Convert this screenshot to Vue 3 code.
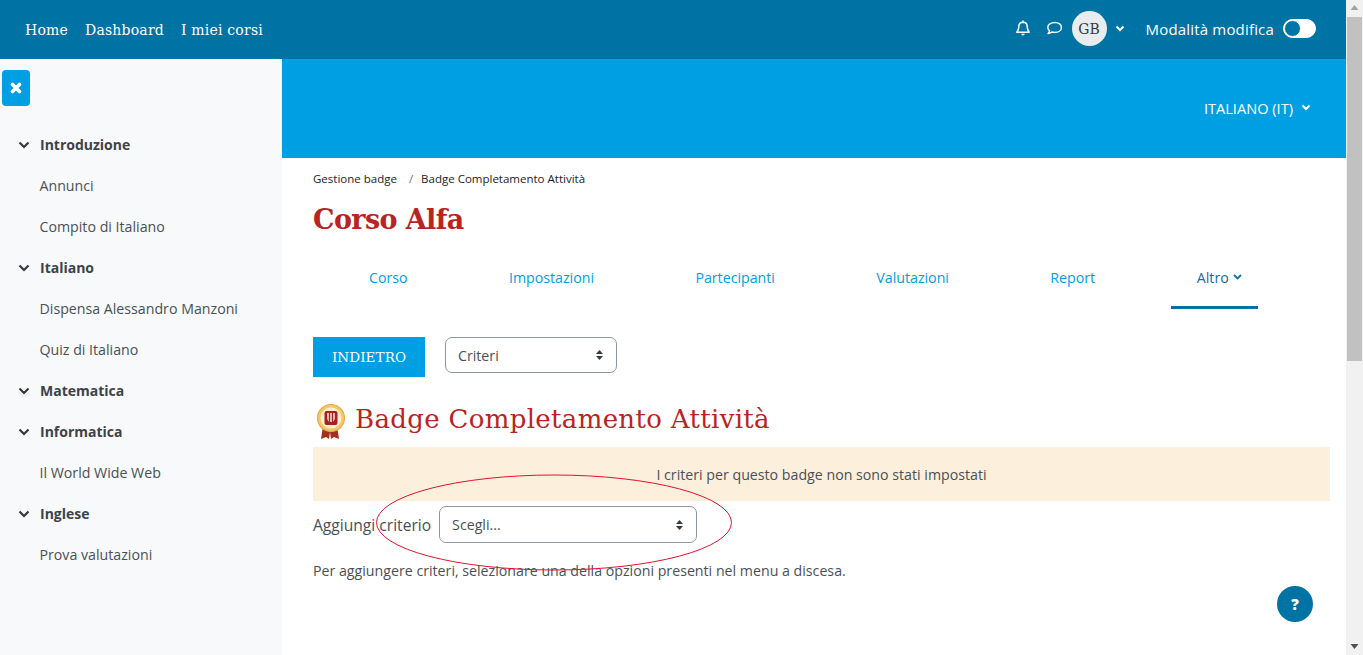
<script setup>
const topLinks = ['Home', 'Dashboard', 'I miei corsi']

// Indice laterale del corso
const sections = [
  { title: 'Introduzione', items: ['Annunci', 'Compito di Italiano'] },
  { title: 'Italiano', items: ['Dispensa Alessandro Manzoni', 'Quiz di Italiano'] },
  { title: 'Matematica', items: [] },
  { title: 'Informatica', items: ['Il World Wide Web'] },
  { title: 'Inglese', items: ['Prova valutazioni'] }
]

const tabs = ['Corso', 'Impostazioni', 'Partecipanti', 'Valutazioni', 'Report']
</script>

<template>
  <div class="page">
    <div class="window">
      <header class="topbar">
        <nav class="top-links">
          <a v-for="link in topLinks" :key="link">{{ link }}</a>
        </nav>
        <div class="top-right">
          <svg class="bell" width="16" height="17" viewBox="0 0 16 17" fill="none" stroke="#fff" stroke-width="1.5">
            <path d="M8 2.200c-2.700 0-4.200 2-4.200 4.600 0 2.900-.8 4.100-2 5.400h12.400c-1.200-1.300-2-2.500-2-5.400C12.200 4.200 10.700 2.200 8 2.200z" stroke-linejoin="round" />
            <path d="M8 .6v1.600" />
            <path d="M6.300 13.800a1.700 1.700 0 0 0 3.400 0z" fill="#fff" stroke="none" />
          </svg>
          <svg class="chat" width="17" height="15" viewBox="0 0 17 15" fill="none" stroke="#fff" stroke-width="1.400">
            <path d="M8.800 1.500c-4 0-7 2.200-7 4.900 0 1.300.7 2.400 1.800 3.300-.2 1-.8 2-1.600 2.900 1.500-.2 2.900-.8 3.900-1.600.9.300 1.900.4 2.900.4 3.900 0 6.600-2.200 6.600-5S12.800 1.500 8.800 1.500z" stroke-linejoin="round" />
          </svg>
          <div class="avatar">GB</div>
          <svg class="chev user-chev" width="10" height="7" viewBox="0 0 10 7"><path d="M1.500 1.500 5 5l3.500-3.500" fill="none" stroke="#fff" stroke-width="2" /></svg>
          <span class="edit-label">Modalità modifica</span>
          <div class="toggle"><span class="knob"></span></div>
        </div>
      </header>

      <div class="body">
        <aside class="sidebar">
          <button class="close-btn">
            <svg width="12" height="12" viewBox="0 0 12 12"><path d="M2.500 2.500l7 7M9.500 2.500l-7 7" stroke="#fff" stroke-width="3.600" stroke-linecap="round" /></svg>
          </button>
          <ul class="course-index">
            <template v-for="section in sections" :key="section.title">
              <li class="section-title">
                <svg width="12" height="8" viewBox="0 0 12 8"><path d="M1.500 1.500 6 6l4.500-4.500" fill="none" stroke="#343a40" stroke-width="2.200" /></svg>
                <span>{{ section.title }}</span>
              </li>
              <li v-for="item in section.items" :key="item" class="section-item">{{ item }}</li>
            </template>
          </ul>
        </aside>

        <main class="main">
          <div class="banner">
            <span>ITALIANO (IT)</span>
            <svg width="10" height="7" viewBox="0 0 10 7"><path d="M1.500 1.500 5 5l3.500-3.500" fill="none" stroke="#fff" stroke-width="2" /></svg>
          </div>

          <div class="content">
            <div class="breadcrumb">
              <span>Gestione badge</span>
              <span class="sep">/</span>
              <span>Badge Completamento Attività</span>
            </div>
            <h1 class="course-title">Corso Alfa</h1>

            <nav class="tabs">
              <a v-for="tab in tabs" :key="tab" class="tab">{{ tab }}</a>
              <a class="tab active">
                Altro
                <svg width="9" height="6" viewBox="0 0 9 6"><path d="M1 1l3.500 3.500L8 1" fill="none" stroke="#0f6fa0" stroke-width="1.800" /></svg>
              </a>
            </nav>

            <div class="action-row">
              <button class="back-btn">INDIETRO</button>
              <div class="select select-criteri">
                <span>Criteri</span>
                <svg width="9" height="12" viewBox="0 0 9 12"><path d="M4.500 1 8 5H1zM4.500 11 1 7h7z" fill="#343a40" /></svg>
              </div>
            </div>

            <h2 class="badge-title">
              <svg class="badge-icon" width="32" height="36" viewBox="0 0 32 36">
                <path d="M10 22 8 35l5-2 3 2 1-7 1 7 3-2 5 2-2-13z" fill="#a3301f" />
                <circle cx="18" cy="14" r="13.500" fill="#f4c76a" stroke="#e9ad47" stroke-width="1.200" />
                <circle cx="18" cy="14" r="10.500" fill="#fbeecb" />
                <rect x="11.500" y="7" width="13" height="14" rx="2" fill="#a81f24" />
                <path d="M14 9v6l2 3V9zM17 9v9h2V9zM20 9v9l2-3V9z" fill="#e8b9a6" />
              </svg>
              <span>Badge Completamento Attività</span>
            </h2>

            <div class="notice">I criteri per questo badge non sono stati impostati</div>

            <div class="criteria-row">
              <label>Aggiungi criterio</label>
              <div class="select select-add">
                <span>Scegli...</span>
                <svg width="9" height="12" viewBox="0 0 9 12"><path d="M4.500 1 8 5H1zM4.500 11 1 7h7z" fill="#343a40" /></svg>
              </div>
            </div>

            <p class="hint">Per aggiungere criteri, selezionare una della opzioni presenti nel menu a discesa.</p>
          </div>

          <!-- cerchio rosso disegnato sopra lo screenshot -->
          <svg class="annotation" width="360" height="100" viewBox="0 0 360 100">
            <ellipse cx="178" cy="48.500" rx="177.500" ry="47.500" fill="none" stroke="#e8112d" stroke-width="1" />
          </svg>

          <button class="help-btn">?</button>
        </main>
      </div>
    </div>

    <div class="scrollbar">
      <svg width="17" height="17" viewBox="0 0 17 17"><path d="M8.500 5 12.500 10h-8z" fill="#a3a3a3" /></svg>
      <div class="thumb"></div>
      <svg width="17" height="17" viewBox="0 0 17 17"><path d="M8.500 11 4.500 6h8z" fill="#505050" /></svg>
    </div>
  </div>
</template>

<style>
html,
body {
  margin: 0;
  overflow: hidden;
}
</style>

<style scoped>
.page {
  display: flex;
  width: 1363px;
  height: 655px;
  overflow: hidden;
  font-family: "Open Sans", "Liberation Sans", sans-serif;
  font-size: 14.2px;
  color: #495057;
  background: #fff;
}

.window {
  flex: 1;
  min-width: 0;
  display: flex;
  flex-direction: column;
}

.topbar {
  height: 59px;
  flex-shrink: 0;
  display: flex;
  align-items: center;
  justify-content: space-between;
  padding: 0 30px 0 25px;
  background: #0073a5;
  color: #fff;
}

.top-links {
  display: flex;
  gap: 17px;
  font-family: "DejaVu Serif", serif;
  font-size: 14px;
  letter-spacing: 0.2px;
}

.top-right {
  display: flex;
  align-items: center;
  margin-bottom: 2px;
}

.bell {
  margin-right: 15px;
}

.chat {
  margin-right: 9px;
}

.avatar {
  width: 35px;
  height: 35px;
  border-radius: 50%;
  background: #e9ecef;
  color: #343a40;
  display: flex;
  align-items: center;
  justify-content: center;
  font-family: "DejaVu Serif", serif;
  font-size: 14px;
}

.user-chev {
  margin: 0 21px 0 8px;
}

.edit-label {
  font-size: 15px;
  letter-spacing: 0.18px;
  margin-right: 9px;
}

.toggle {
  width: 33px;
  height: 19px;
  border-radius: 10px;
  background: #fff;
  box-sizing: border-box;
  border: 1px solid #fff;
  display: flex;
  align-items: center;
}

.knob {
  width: 17px;
  height: 17px;
  border-radius: 50%;
  background: #0073a5;
  box-sizing: border-box;
  border: 1px solid #fff;
}

.body {
  flex: 1;
  display: flex;
  min-height: 0;
}

.sidebar {
  width: 282px;
  flex-shrink: 0;
  background: #f8f9fa;
  padding-top: 11px;
  box-sizing: border-box;
}

.close-btn {
  display: flex;
  align-items: center;
  justify-content: center;
  width: 28px;
  height: 36px;
  margin-left: 2px;
  padding: 0;
  border: none;
  border-radius: 4px;
  background: #009fe3;
}

.course-index {
  list-style: none;
  margin: 18px 0 0;
  padding: 0;
}

.section-title,
.section-item {
  height: 41px;
  display: flex;
  align-items: center;
}

.section-title {
  font-size: 14px;
  font-weight: 700;
  color: #3d4349;
  gap: 10px;
  padding-left: 18px;
}

.section-item {
  padding-left: 39.5px;
}

.main {
  position: relative;
  flex: 1;
  min-width: 0;
}

.banner {
  box-sizing: border-box;
  height: 99px;
  display: flex;
  align-items: center;
  justify-content: flex-end;
  gap: 8px;
  padding: 0 35px 2px 0;
  background: #009fe3;
  color: #fff;
  font-size: 14.6px;
}

.content {
  padding: 13px 16px 0 31px;
}

.breadcrumb {
  display: flex;
  font-size: 11.5px;
  line-height: 16px;
  color: #1d2125;
}

.sep {
  margin: 0 8px 0 12px;
  color: #6a737b;
}

.course-title {
  margin: 15px 0 0;
  font-family: "DejaVu Serif", serif;
  font-weight: 700;
  font-size: 27px;
  line-height: 36px;
  letter-spacing: -0.6px;
  color: #ba2323;
}

.tabs {
  display: flex;
  margin-top: 12px;
  height: 59px;
}

.tab {
  display: flex;
  align-items: center;
  gap: 4px;
  box-sizing: border-box;
  height: 59px;
  padding: 0 50.7px 2px;
  border-bottom: 3px solid transparent;
  color: #009fe3;
  white-space: nowrap;
}

.tab:first-child {
  padding-left: 56px;
}

.tab.active {
  padding: 0 16px 2px 26px;
  margin-left: 25px;
  color: #0f6fa0;
  border-bottom-color: #0073a5;
}

.action-row {
  display: flex;
  align-items: flex-start;
  gap: 20px;
  margin-top: 28px;
}

.back-btn {
  width: 112px;
  height: 40px;
  padding: 0;
  border: none;
  background: #009fe3;
  color: #fff;
  font-family: "DejaVu Serif", serif;
  font-size: 13.5px;
  letter-spacing: 0.1px;
}

.select {
  display: flex;
  align-items: center;
  justify-content: space-between;
  box-sizing: border-box;
  height: 36px;
  padding: 0 12px;
  background: #fff;
  border: 1px solid #8f959e;
  border-radius: 7px;
  color: #495057;
}

.select-criteri {
  width: 172px;
}

.select-add {
  width: 258px;
  height: 37px;
  font-size: 14.2px;
}

.badge-title {
  display: flex;
  align-items: center;
  margin: 19px 0 5px;
  height: 46px;
  font-family: "DejaVu Serif", serif;
  font-weight: 400;
  font-size: 26px;
  letter-spacing: 0.33px;
  color: #ba2323;
}

.badge-icon {
  margin: 6px 10px 0 0;
}

.notice {
  height: 54px;
  display: flex;
  align-items: center;
  justify-content: center;
  background: #fcefdc;
  color: #495057;
}

.criteria-row {
  display: flex;
  align-items: center;
  gap: 8px;
  margin-top: 5px;
  font-size: 15.6px;
}

.hint {
  margin: 18px 0 0;
  line-height: 20px;
}

.annotation {
  position: absolute;
  left: 94px;
  top: 415px;
  pointer-events: none;
}

.help-btn {
  position: absolute;
  right: 33px;
  bottom: 33px;
  width: 36px;
  height: 36px;
  padding: 0;
  border: none;
  border-radius: 50%;
  background: #0073a5;
  color: #fff;
  font-family: "Open Sans", sans-serif;
  font-weight: 800;
  font-size: 15px;
}

.scrollbar {
  width: 17px;
  flex-shrink: 0;
  display: flex;
  flex-direction: column;
  background: #f1f1f1;
}

.thumb {
  width: 15px;
  height: 344px;
  margin-left: 1px;
  background: #c1c1c1;
  margin-bottom: auto;
}
</style>
